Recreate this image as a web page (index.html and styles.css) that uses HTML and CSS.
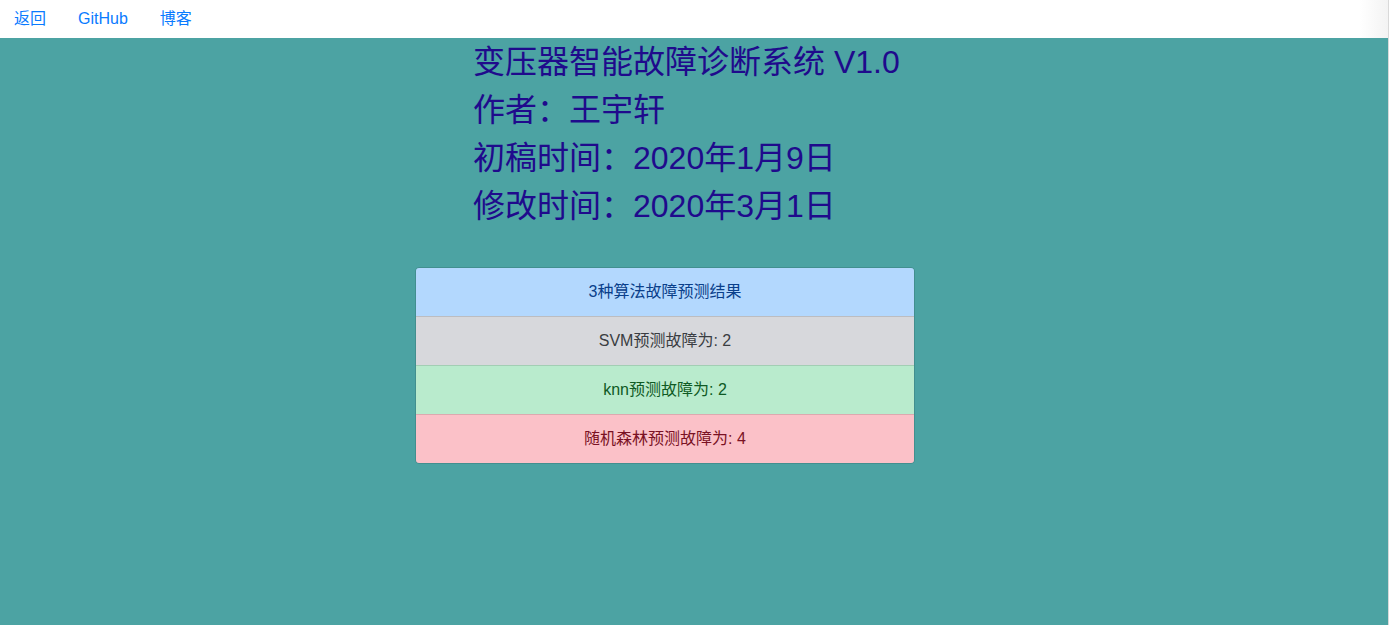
FILE: index.html
```html
<!DOCTYPE html>
<html lang="zh">
<head>
<meta charset="utf-8">
<title>变压器智能故障诊断系统</title>
<link rel="stylesheet" href="styles.css">
</head>
<body>
<div class="page">
  <nav class="topnav">
    <a class="nav-link" href="#">返回</a>
    <a class="nav-link" href="#">GitHub</a>
    <a class="nav-link" href="#">博客</a>
  </nav>
  <main class="content">
    <div class="info">
      <h2 class="info-line">变压器智能故障诊断系统 V1.0</h2>
      <h2 class="info-line">作者：王宇轩</h2>
      <h2 class="info-line">初稿时间：2020年1月9日</h2>
      <h2 class="info-line">修改时间：2020年3月1日</h2>
    </div>
    <ul class="result-list">
      <li class="result-item item-primary">3种算法故障预测结果</li>
      <li class="result-item item-secondary">SVM预测故障为: 2</li>
      <li class="result-item item-success">knn预测故障为: 2</li>
      <li class="result-item item-danger">随机森林预测故障为: 4</li>
    </ul>
  </main>
</div>
</body>
</html>
```

FILE: styles.css
```css
html {
  margin: 0;
  padding: 0;
  background: #d9d9d9;
  height: 100%;
}
body {
  margin: 0;
  padding: 0;
  height: 100%;
  font-family: "Liberation Sans", "Noto Sans CJK SC", sans-serif;
}
.page {
  margin-right: 1px;
  height: 100%;
  background: #4ca3a3;
  display: flex;
  flex-direction: column;
}
.topnav {
  height: 38px;
  flex: 0 0 38px;
  background: linear-gradient(to right, #ffffff 0, #ffffff calc(100% - 28px), #f3f3f3 100%);
  display: flex;
  align-items: center;
  padding-left: 14px;
}
.nav-link {
  color: #0a7bff;
  text-decoration: none;
  font-size: 16px;
  line-height: 24px;
  margin-right: 32px;
}
.content {
  flex: 1;
}
.info {
  padding-left: 473px;
}
.info-line {
  margin: 0;
  font-size: 32px;
  line-height: 48px;
  font-weight: normal;
  color: #1f0a8c;
}
.result-list {
  list-style: none;
  margin: 37px 0 0 415px;
  padding: 0;
  width: 500px;
  border-radius: 4px;
  overflow: hidden;
  border: 1px solid rgba(0, 0, 0, 0.12);
  box-sizing: border-box;
}
.result-item {
  text-align: center;
  font-size: 16px;
  line-height: 24px;
  padding: 12px 20px;
}
.result-item + .result-item {
  border-top: 1px solid rgba(0, 0, 0, 0.12);
}
.item-primary {
  background: #b3d8fe;
  color: #0a3f8a;
}
.item-secondary {
  background: #d7d8dc;
  color: #3a3d42;
}
.item-success {
  background: #b9ebcd;
  color: #0f5a24;
}
.item-danger {
  background: #fbc1c8;
  color: #7a1224;
}
```
